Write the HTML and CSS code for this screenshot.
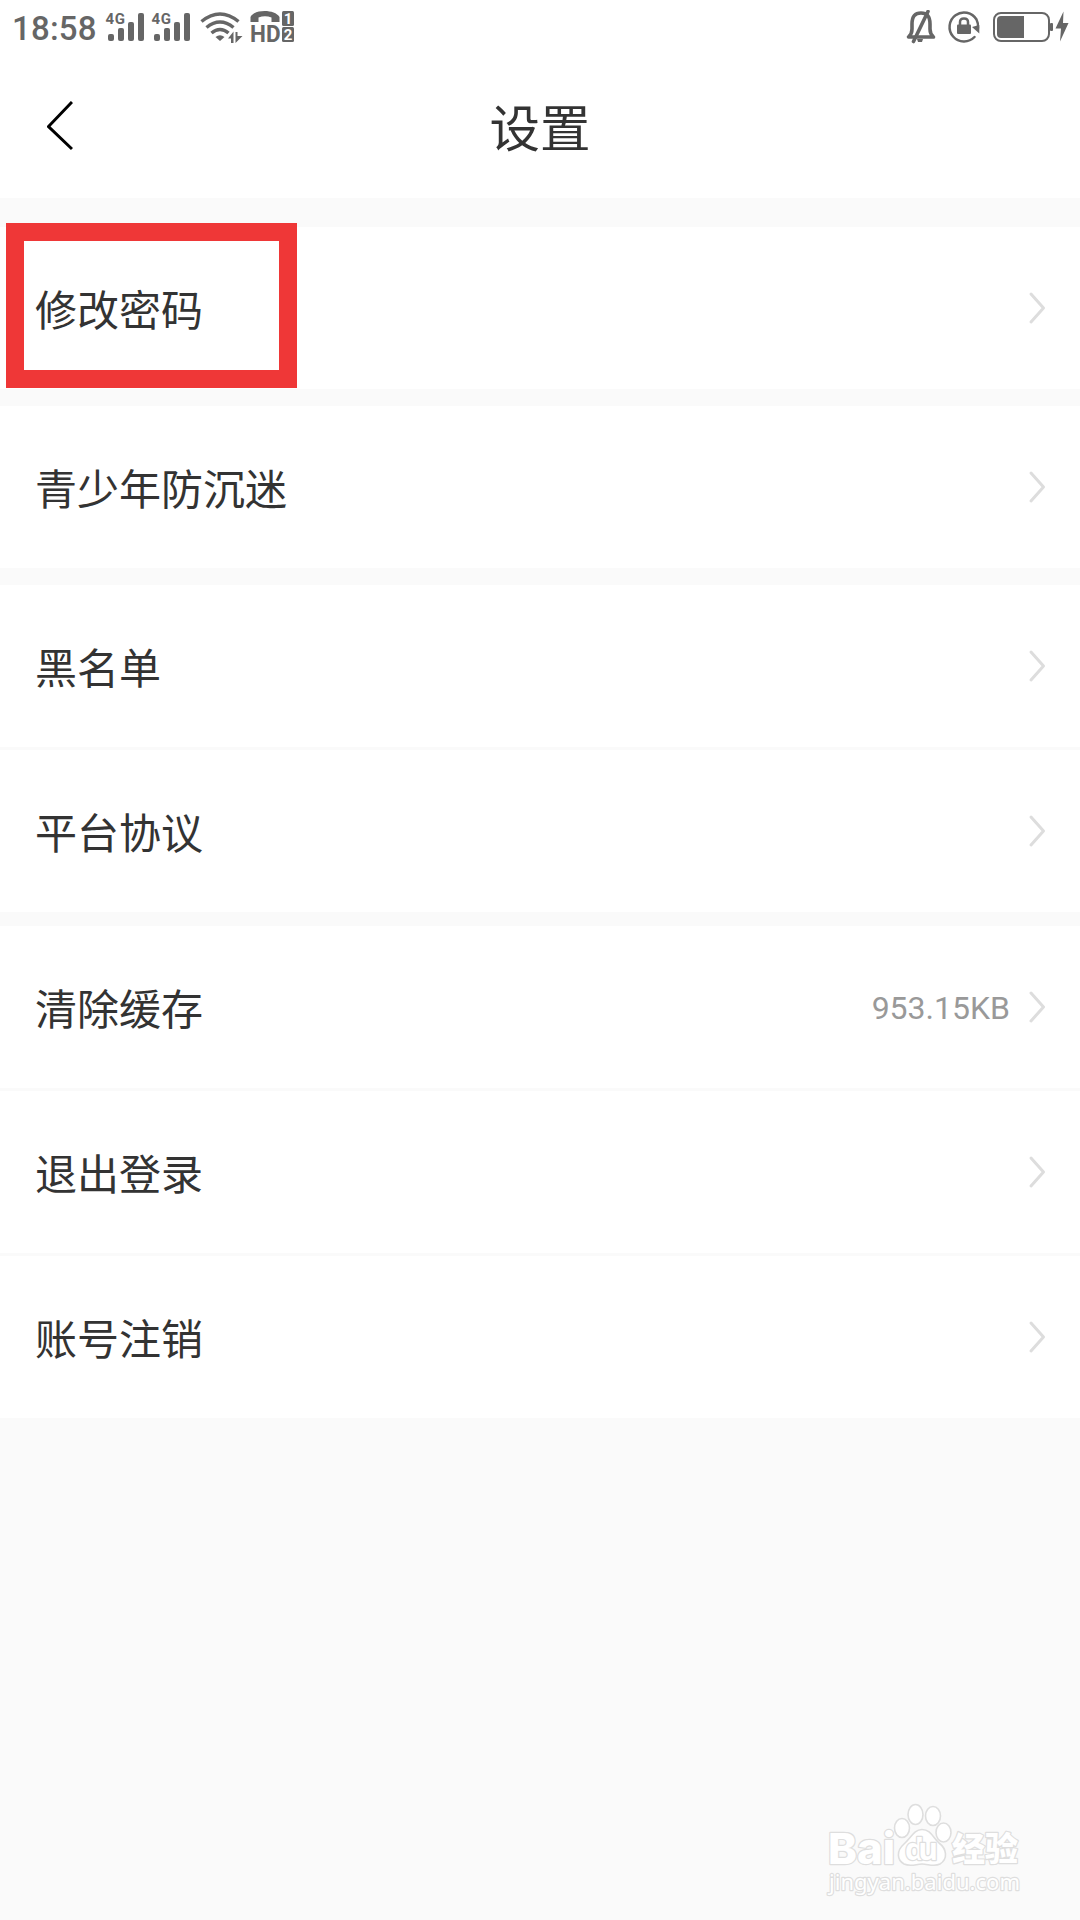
FILE: index.html
```html
<!DOCTYPE html>
<html lang="zh-CN">
<head>
<meta charset="utf-8">
<title>设置</title>
<link rel="stylesheet" href="styles.css">
</head>
<body>
<header class="top">
  <div class="status">
    <span class="clock">18:58</span>
    <svg class="signals" width="86" height="32" viewBox="104 10 86 32">
      <g id="signal">
        <text class="net" x="105.500" y="24" textLength="19.500">4G</text>
        <rect x="108" y="34" width="6" height="7" rx="2"/>
        <rect x="118" y="28" width="6" height="13" rx="2"/>
        <rect x="128" y="22" width="6" height="19" rx="2"/>
        <rect x="138" y="13" width="6" height="28" rx="2"/>
      </g>
      <use href="#signal" x="46"/>
    </svg>
    <svg class="wifi" width="44" height="34" viewBox="200 10 44 34">
      <g class="arc">
        <path d="M201.500 21.500Q220 6.500 238.500 21.500"/>
        <path d="M206.500 27.500Q220 16.500 233.500 27.500"/>
        <path d="M211.500 33Q220 26 228.500 33"/>
      </g>
      <path d="M215.500 37Q220 33.500 224.500 37L220 41Z"/>
      <path d="M228 38.500L233.500 31.500V43H231V38.500ZM235.500 43V32H237.500V36H242.500Z"/>
    </svg>
    <svg class="volte" width="46" height="40" viewBox="249 10 46 40">
      <path d="M250.500 22V17C254 9 275 9 279.500 17V22H271.500V17.500Q265 15 258.500 17.500V22Z"/>
      <text class="hd" x="250" y="41.500" textLength="30.500" lengthAdjust="spacingAndGlyphs">HD</text>
      <rect x="282" y="11" width="12" height="15" rx="1.500"/>
      <rect x="282" y="27" width="12" height="15" rx="1.500"/>
      <text class="sim" x="288" y="24">1</text>
      <text class="sim" x="288" y="40">2</text>
    </svg>
    <svg class="right" width="168" height="34" viewBox="904 10 168 34">
      <g class="line">
        <path d="M908.500 37Q912 34 912 29V24C912 16 915 13 921 13C927 13 930 16 930 24V29Q930 34 933.500 37Z" stroke-width="3.600"/>
        <path d="M913.500 41.500L928 11.500" stroke-width="3.600"/>
        <path d="M976.500 19.500A14.500 14.500 0 1 0 974.500 37M976.500 19.500A15 15 0 0 1 978 28" stroke-width="2.500"/>
        <path d="M960 26V22Q960 18.500 964 18.500Q968 18.500 968 22V26" stroke-width="2.500"/>
        <rect x="994" y="13" width="55" height="28" rx="7" stroke-width="2"/>
      </g>
      <path d="M917 39H923L922 42H918Z"/>
      <rect x="957" y="24.500" width="14" height="9.500" rx="1"/>
      <path d="M972 27L979.300 33.500V25Z"/>
      <path d="M1024 16V38H1001Q997 38 997 34V20Q997 16 1001 16Z"/>
      <rect x="1050" y="23" width="3" height="8" rx="1"/>
      <path d="M1063.500 11.500L1055.500 28.500H1061L1060 41.500L1068.500 23H1063Z"/>
    </svg>
  </div>
  <nav class="title-bar">
    <svg class="back" width="26" height="50" viewBox="0 0 26 50"><path d="M25 1L1.500 25.500L25 48"/></svg>
    <h1 class="title">设置</h1>
  </nav>
</header>
<main class="list">
  <section class="group">
    <div class="row marked"><span class="label">修改密码</span><svg class="chev" viewBox="0 0 18 34"><path d="M3 3L15.500 17L3 31"/></svg></div>
  </section>
  <section class="group">
    <div class="row"><span class="label">青少年防沉迷</span><svg class="chev" viewBox="0 0 18 34"><path d="M3 3L15.500 17L3 31"/></svg></div>
  </section>
  <section class="group">
    <div class="row"><span class="label">黑名单</span><svg class="chev" viewBox="0 0 18 34"><path d="M3 3L15.500 17L3 31"/></svg></div>
    <div class="row"><span class="label">平台协议</span><svg class="chev" viewBox="0 0 18 34"><path d="M3 3L15.500 17L3 31"/></svg></div>
  </section>
  <section class="group account">
    <div class="row"><span class="label">清除缓存</span><span class="size">953.15KB</span><svg class="chev" viewBox="0 0 18 34"><path d="M3 3L15.500 17L3 31"/></svg></div>
    <div class="row"><span class="label">退出登录</span><svg class="chev" viewBox="0 0 18 34"><path d="M3 3L15.500 17L3 31"/></svg></div>
    <div class="row"><span class="label">账号注销</span><svg class="chev" viewBox="0 0 18 34"><path d="M3 3L15.500 17L3 31"/></svg></div>
  </section>
</main>
<svg class="watermark" width="200" height="100" viewBox="825 1800 200 100">
  <text class="brand" x="828" y="1864" textLength="67" lengthAdjust="spacingAndGlyphs">Bai</text>
  <g class="paw">
    <ellipse cx="902" cy="1828" rx="7.500" ry="9.500"/>
    <ellipse cx="915.500" cy="1814.500" rx="7.500" ry="10"/>
    <ellipse cx="933" cy="1816" rx="7.500" ry="9.500"/>
    <ellipse cx="943.500" cy="1832.500" rx="7.500" ry="9.500"/>
    <path d="M922 1829.500C931 1829.500 933 1838 939 1843C947 1849 948 1859 940 1864C934 1867 928 1864 922 1864C916 1864 911 1867 904 1864C897 1860 896 1851 904 1844C911 1838 914 1829.500 922 1829.500Z"/>
  </g>
  <text class="du" x="905" y="1860" textLength="33">du</text>
  <text class="exp" x="952" y="1861" textLength="66">经验</text>
  <text class="site" x="829" y="1890" textLength="191">jingyan.baidu.com</text>
</svg>
</body>
</html>
```
FILE: styles.css
```css
*, *::after { box-sizing: border-box; }
body {
  margin: 0;
  min-height: 1920px;
  position: relative;
  background: #fafafa;
  color: #333;
  font-family: Roboto, "Noto Sans CJK SC", sans-serif;
}
svg { display: block; flex: none; }

.top { height: 198px; background: #fff; }
.status {
  display: flex;
  align-items: flex-start;
  height: 56px;
  padding: 10px 8px 0 12px;
  fill: #666;
}
.clock {
  width: 92px;
  font-size: 33px;
  font-weight: 500;
  line-height: 37px;
  letter-spacing: 0.2px;
  color: #666;
}
.net { font: 700 15px Roboto, sans-serif; }
.wifi { margin-left: 10px; }
.arc { fill: none; stroke: #666; stroke-width: 3.5; }
.volte { margin-left: 5px; }
.hd { font: 700 24px Roboto, sans-serif; }
.sim { font: 700 15px Roboto, sans-serif; fill: #fff; text-anchor: middle; }
.right { margin-left: auto; }
.line { fill: none; stroke: #666; stroke-linecap: round; stroke-linejoin: round; }

.title-bar {
  display: grid;
  grid-template-columns: 72px 1fr 72px;
  height: 142px;
  align-items: start;
}
.back {
  margin: 45px 0 0 47px;
  fill: none;
  stroke: #000;
  stroke-width: 3;
}
.title {
  margin: 39px 0 0;
  font-size: 50.5px;
  line-height: 70px;
  font-weight: 400;
  text-align: center;
}

.list { display: flex; flex-direction: column; gap: 17px; padding-top: 29px; }
.group { display: flex; flex-direction: column; gap: 3px; }
.account { margin-top: -3px; }
.row {
  position: relative;
  display: flex;
  align-items: center;
  height: 162px;
  padding: 0 34px 0 35px;
  background: #fff;
  font-size: 42px;
  line-height: 60px;
}
.label { padding-top: 8px; }
.chev {
  width: 18px;
  height: 34px;
  margin-left: auto;
  fill: none;
  stroke: #ddd;
  stroke-width: 3;
  stroke-linecap: round;
  stroke-linejoin: round;
}
.size { margin-left: auto; padding-top: 1px; font-size: 32px; color: #999; }
.size + .chev { margin-left: 18px; }
.marked::after {
  content: "";
  position: absolute;
  left: 6px;
  top: -4px;
  width: 291px;
  height: 165px;
  border: 18px solid #ef3737;
}

.watermark {
  position: absolute;
  left: 825px;
  top: 1800px;
  fill: #fff;
  stroke: #dedede;
  stroke-width: 2.4;
  stroke-linejoin: round;
}
.watermark text { paint-order: stroke; }
.brand { font: 800 43px Inter, sans-serif; }
.paw { stroke-width: 1.6; }
.watermark .du { font: 700 30px "Open Sans", sans-serif; }
.exp { font: 900 33px "Noto Sans CJK SC", sans-serif; }
.site { font: 400 22px "Noto Sans", sans-serif; }
```
